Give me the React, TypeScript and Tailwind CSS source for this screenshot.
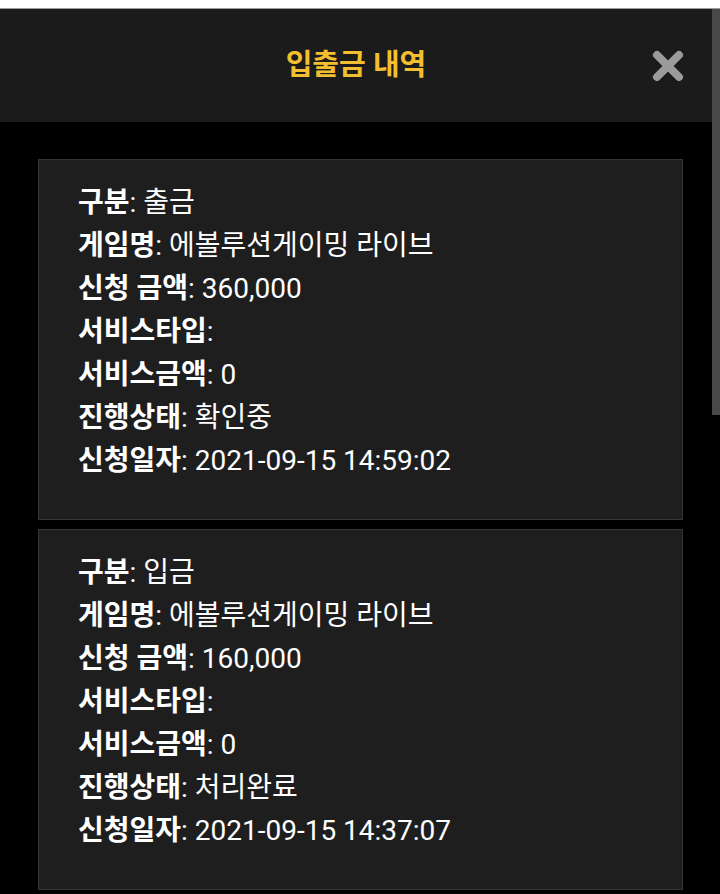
import React from "react";

interface Row {
  label: string;
  value: string;
}

const records: Row[][] = [
  [
    { label: "구분", value: "출금" },
    { label: "게임명", value: "에볼루션게이밍 라이브" },
    { label: "신청 금액", value: "360,000" },
    { label: "서비스타입", value: "" },
    { label: "서비스금액", value: "0" },
    { label: "진행상태", value: "확인중" },
    { label: "신청일자", value: "2021-09-15 14:59:02" },
  ],
  [
    { label: "구분", value: "입금" },
    { label: "게임명", value: "에볼루션게이밍 라이브" },
    { label: "신청 금액", value: "160,000" },
    { label: "서비스타입", value: "" },
    { label: "서비스금액", value: "0" },
    { label: "진행상태", value: "처리완료" },
    { label: "신청일자", value: "2021-09-15 14:37:07" },
  ],
];

function CloseIcon() {
  return (
    <svg width="36" height="36" viewBox="0 0 36 36" aria-hidden>
      <path
        d="M7 7 L29 29 M29 7 L7 29"
        stroke="#9b9b9b"
        strokeWidth="8"
        strokeLinecap="round"
      />
    </svg>
  );
}

function RecordCard({ rows }: { rows: Row[] }) {
  return (
    <div className="ml-[38px] w-[645px] bg-[#1e1e1e] border border-[#363636] pl-[39px] pt-[21px] pb-[37px]">
      {rows.map((r, i) => (
        <div key={i} className="text-white text-[28px] leading-[43px] whitespace-nowrap">
          <span className="font-bold">{r.label}</span>
          <span>:</span>
          {r.value && <span> {r.value}</span>}
        </div>
      ))}
    </div>
  );
}

export default function App() {
  return (
    <div
      className="w-[720px] h-[894px] overflow-hidden bg-black flex flex-col"
      style={{ fontFamily: "Roboto, 'Noto Sans CJK KR', sans-serif" }}
    >
      {/* top strip */}
      <div className="h-[9px] bg-white border-b border-[#9a9a9a] shrink-0" />

      <div className="flex flex-1 min-h-0">
        <div className="w-[712px] flex flex-col">
          {/* header */}
          <div className="h-[113px] bg-[#1b1b1b] flex items-center justify-between shrink-0">
            <div className="w-[100px]" />
            <h1 className="text-[29px] font-bold text-[#f3bf30] leading-none">입출금 내역</h1>
            <div className="w-[100px] flex justify-end pr-[26px]">
              <CloseIcon />
            </div>
          </div>

          <div className="flex flex-col gap-[9px] pt-[37px]">
            {records.map((rows, i) => (
              <RecordCard key={i} rows={rows} />
            ))}
          </div>
        </div>

        {/* scrollbar */}
        <div className="w-[8px] bg-black">
          <div className="h-[406px] bg-[#484848]" />
        </div>
      </div>
    </div>
  );
}
